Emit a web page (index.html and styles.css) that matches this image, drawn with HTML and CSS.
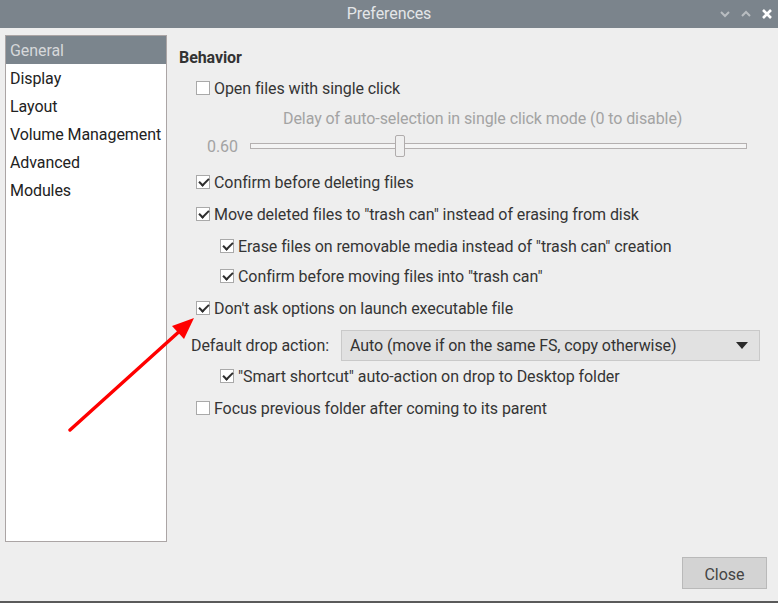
FILE: index.html
```html
<!DOCTYPE html>
<html>
<head>
<meta charset="utf-8">
<title>Preferences</title>
<link rel="stylesheet" href="styles.css">
</head>
<body>
<div class="window">
  <div class="titlebar">
    <span class="title">Preferences</span>
    <div class="controls">
      <svg class="ctl" width="12" height="8" viewBox="0 0 12 8"><path d="M2 2 L6 6 L10 2" fill="none" stroke="#b9bdc1" stroke-width="2"/></svg>
      <svg class="ctl" width="12" height="8" viewBox="0 0 12 8"><path d="M2 6 L6 2 L10 6" fill="none" stroke="#b9bdc1" stroke-width="2"/></svg>
      <svg class="ctl close-x" width="12" height="12" viewBox="0 0 12 12"><path d="M2 2 L10 10 M10 2 L2 10" fill="none" stroke="#ffffff" stroke-width="2.6"/></svg>
    </div>
  </div>
  <div class="main">
    <ul class="sidebar">
      <li class="item selected">General</li>
      <li class="item">Display</li>
      <li class="item">Layout</li>
      <li class="item">Volume Management</li>
      <li class="item">Advanced</li>
      <li class="item">Modules</li>
    </ul>
    <div class="content">
      <div class="heading">Behavior</div>
      <div class="row r-open"><span class="box"></span><span>Open files with single click</span></div>
      <div class="delay-label">Delay of auto-selection in single click mode (0 to disable)</div>
      <div class="slider-row">
        <span class="slider-value">0.60</span>
        <div class="track"><span class="thumb"></span></div>
      </div>
      <div class="row r-confirm"><span class="box checked"></span><span>Confirm before deleting files</span></div>
      <div class="row r-gap12"><span class="box checked"></span><span>Move deleted files to "trash can" instead of erasing from disk</span></div>
      <div class="row r-gap12 sub"><span class="box checked"></span><span>Erase files on removable media instead of "trash can" creation</span></div>
      <div class="row r-gap10 sub"><span class="box checked"></span><span>Confirm before moving files into "trash can"</span></div>
      <div class="row r-gap12"><span class="box checked"></span><span>Don't ask options on launch executable file</span></div>
      <div class="drop-row">
        <span class="drop-label">Default drop action:</span>
        <div class="combo"><span>Auto (move if on the same FS, copy otherwise)</span><span class="caret"></span></div>
      </div>
      <div class="row r-gap5 sub"><span class="box checked"></span><span>"Smart shortcut" auto-action on drop to Desktop folder</span></div>
      <div class="row r-gap12"><span class="box"></span><span>Focus previous folder after coming to its parent</span></div>
    </div>
  </div>
  <div class="footer">
    <button class="btn">Close</button>
  </div>
  <svg class="arrow" width="140" height="130" viewBox="0 0 140 130">
    <line x1="10" y1="128" x2="122" y2="27" stroke="#ff0000" stroke-width="3.4" stroke-linecap="round"/>
    <polygon points="134,16 112,24 124,37" fill="#ff0000"/>
  </svg>
</div>
</body>
</html>
```

FILE: styles.css
```css
* { box-sizing: border-box; }
html, body { margin: 0; padding: 0; }
body {
  width: 778px;
  height: 603px;
  overflow: hidden;
  font-family: Roboto, "Liberation Sans", sans-serif;
  font-size: 16px;
  letter-spacing: -0.08px;
  color: #353535;
  background: #ededed;
}
.window {
  position: relative;
  width: 778px;
  height: 603px;
  display: flex;
  flex-direction: column;
  background: #eeeeee;
  border-bottom: 2px solid #5a5a5a;
}
.titlebar {
  height: 28px;
  flex: none;
  background: #7b848c;
  display: flex;
  align-items: center;
  justify-content: center;
  position: relative;
  padding-bottom: 2px;
}
.title {
  color: #e4e6e8;
  font-size: 16px;
}
.controls {
  position: absolute;
  right: 5px;
  top: 0;
  height: 27px;
  display: flex;
  align-items: center;
  gap: 9px;
}
.main {
  flex: 1;
  display: flex;
  padding: 7px 0 0 5px;
  min-height: 0;
}
.sidebar {
  list-style: none;
  margin: 0;
  padding: 0;
  width: 162px;
  height: 507px;
  background: #ffffff;
  border: 1px solid #aba5a5;
  flex: none;
}
.item {
  height: 28px;
  line-height: 30px;
  padding-left: 4px;
  color: #222;
  white-space: nowrap;
}
.selected {
  background: #7b858d;
  color: #d6d8da;
}
.content {
  flex: 1;
  padding: 13px 0 0 12px;
}
.heading {
  height: 20px;
  line-height: 20px;
  font-weight: bold;
  color: #333;
}
.row {
  height: 20px;
  display: flex;
  align-items: center;
  padding-left: 17px;
  white-space: nowrap;
}
.row.sub { padding-left: 41px; }
.r-open { margin-top: 10px; }
.r-confirm { margin-top: 16px; }
.r-gap12 { margin-top: 12px; }
.r-gap10 { margin-top: 10px; }
.r-gap5 { margin-top: 5px; }
.box {
  width: 14px;
  height: 14px;
  background: #fff;
  border: 1px solid #a9a9a9;
  margin-right: 4px;
  flex: none;
  position: relative;
}
.box.checked::after {
  content: "";
  position: absolute;
  left: 4px;
  top: 0px;
  width: 4px;
  height: 8px;
  border-right: 2.5px solid #2e2e2e;
  border-bottom: 2.5px solid #2e2e2e;
  transform: rotate(45deg);
}
.delay-label {
  margin-top: 10px;
  height: 20px;
  line-height: 22px;
  padding-left: 104px;
  color: #a3a3a3;
  white-space: nowrap;
}
.slider-row {
  margin-top: 8px;
  height: 20px;
  display: flex;
  align-items: center;
  padding-left: 28px;
}
.slider-value {
  color: #a3a3a3;
  width: 43px;
}
.track {
  width: 497px;
  height: 6px;
  border: 1px solid #b4b0b0;
  background: #f4f4f4;
  position: relative;
}
.thumb {
  position: absolute;
  left: 144px;
  top: -9px;
  width: 10px;
  height: 22px;
  background: #efefef;
  border: 1px solid #b0acac;
  border-radius: 2px;
}
.drop-row {
  margin-top: 12px;
  height: 31px;
  display: flex;
  align-items: center;
  padding-left: 12px;
}
.drop-label {
  width: 150px;
  flex: none;
}
.combo {
  width: 419px;
  height: 31px;
  background: #e1e1e1;
  border: 1px solid #c9c9c9;
  display: flex;
  align-items: center;
  justify-content: space-between;
  padding: 0 11px 0 8px;
  color: #333;
}
.caret {
  width: 0;
  height: 0;
  border-left: 6px solid transparent;
  border-right: 6px solid transparent;
  border-top: 7px solid #2a2a2a;
}
.footer {
  height: 60px;
  flex: none;
  display: flex;
  justify-content: flex-end;
  align-items: flex-start;
  padding: 16px 11px 0 0;
}
.btn {
  width: 85px;
  height: 32px;
  background: #d3d3d3;
  border: 1px solid #b9b9b9;
  font-family: Roboto, "Liberation Sans", sans-serif;
  font-size: 16px;
  color: #444;
  padding: 2px 0 0 0;
}
.arrow {
  position: absolute;
  left: 60px;
  top: 302px;
}
```
